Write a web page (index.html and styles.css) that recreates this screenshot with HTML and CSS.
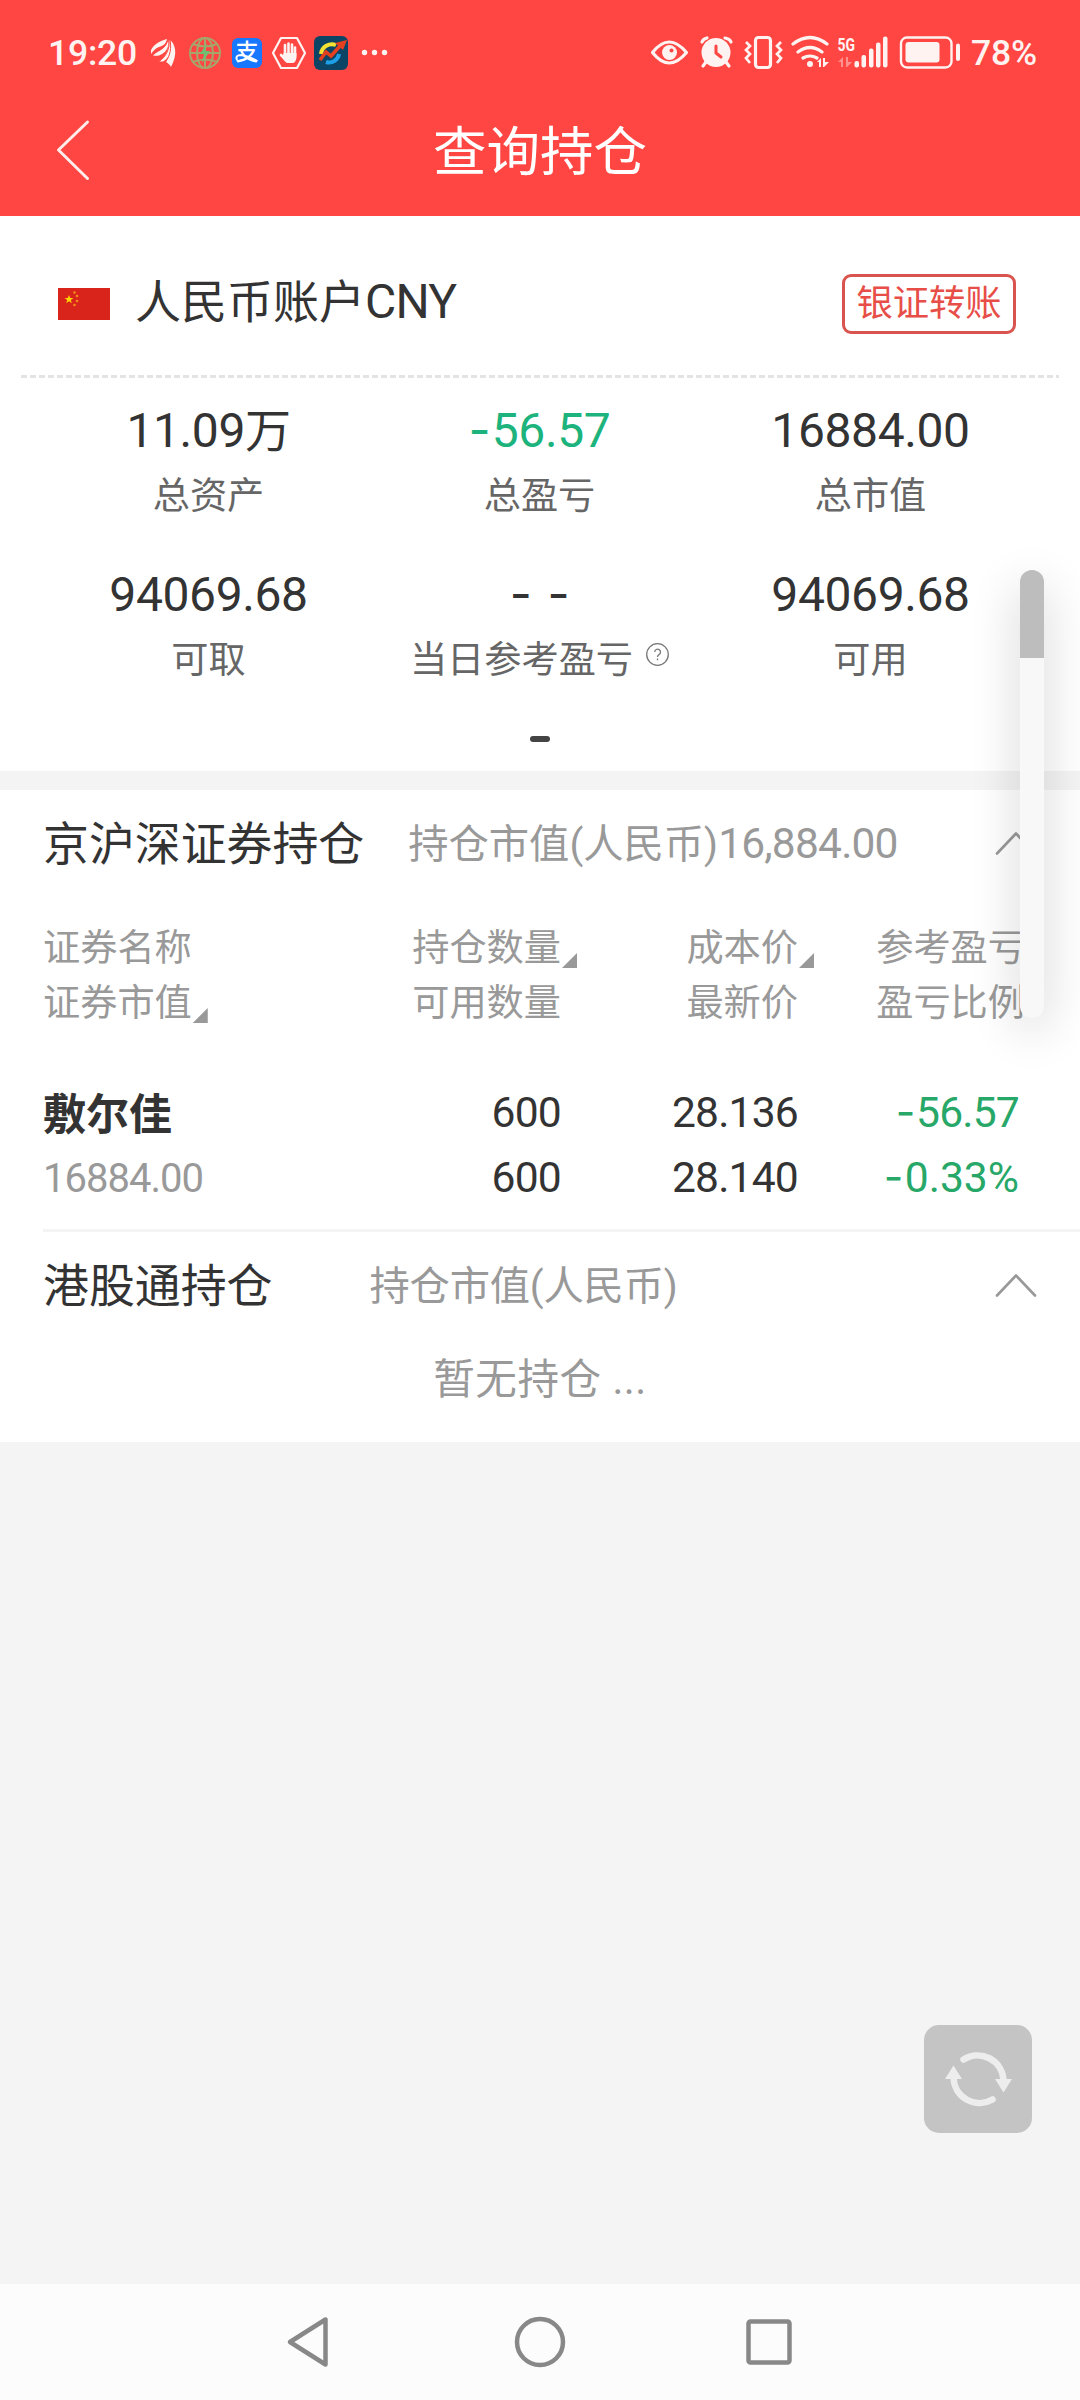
FILE: index.html
```html
<!DOCTYPE html>
<html lang="zh-CN">
<head>
<meta charset="utf-8">
<title>查询持仓</title>
<link rel="stylesheet" href="styles.css">
</head>
<body>
<header class="top">
  <div class="status">
    <div class="status-side">
      <span class="status-text">19:20</span>
      <svg class="status-left" viewBox="150 30 240 46">
        <g fill="#fff3f2">
          <path d="M152 54v-4c3-6 9-9 16-11-1 5-4 7-8 8-3 1-6 4-8 7z"/>
          <path d="M154 55.500c5-5 13-6 15-16 2 8-3 14-9 16q-3 .5-6 0z"/>
          <path d="M160 61.500c7-5 10-12 10-22 5 7 2 18-6 22z"/>
          <path d="M167 62c4-7 6-14 4-22 3 2 4 5 5 9 1 6-1 12-4 18-1-2-3-4-5-5z"/>
        </g>
        <g fill="none" stroke="#ff4642" stroke-width="1"><path d="M153 55c7-7 14-5 16-16M160 61.500c7-5 11-12 10-22M166.500 62c5-7 6-14 4.500-22"/></g>
        <g fill="none" stroke="#a5a56c" stroke-width="2">
          <circle cx="206" cy="53" r="15"/><ellipse cx="206" cy="53" rx="8" ry="15"/>
          <path d="M191 53h30M206 38v30M194 44q12 5 24 0M194 62q12-5 24 0"/>
        </g>
        <path fill="#6fbf73" d="M208 43l-7 11h4l-2 9 8-12h-5z"/>
        <rect x="233" y="38" width="30" height="30" rx="6" fill="#1777ff"/>
        <text class="pay-glyph" x="248" y="60">支</text>
        <path d="M238 60q-2-5 4-5q7 1 16 6" fill="none" stroke="#fff" stroke-width="2"/>
        <path d="M282 38h16l8 15-8 15h-16l-8-15z" fill="none" stroke="#fff3f2" stroke-width="2.2" stroke-linejoin="round"/>
        <g fill="none" stroke="#fff3f2" stroke-width="2.6" stroke-linecap="round"><path d="M286 55V45M289.500 55V43.500M293 55V44.500M296 56V47.500M286 59l-4-4"/></g>
        <path d="M284.500 53h13v5q-1 5-4 5h-5q-2 0-5-5z" fill="#fff3f2"/>
        <rect x="315" y="36" width="34" height="34" rx="6" fill="#0b4464"/>
        <path d="M322 54a11 11 0 0 1 15-9" fill="none" stroke="#f3e233" stroke-width="4"/>
        <path d="M340 54a10 10 0 0 1-13 8" fill="none" stroke="#1d9fe8" stroke-width="4"/>
        <path d="M321 60l6-8 5 4 9-10" fill="none" stroke="#e4401f" stroke-width="3.500"/>
        <path d="M336 43l12-3-4 10z" fill="#e4401f"/>
        <g fill="#fff3f2"><circle cx="365.500" cy="52.500" r="2.700"/><circle cx="375.500" cy="52.500" r="2.700"/><circle cx="385.500" cy="52.500" r="2.700"/></g>
      </svg>
    </div>
    <div class="status-side">
      <svg class="status-right" viewBox="648 30 314 46">
        <g fill="none" stroke="#fff3f2" stroke-width="3.200">
          <path d="M652.500 52.500q16.500-21 34 0q-17.500 21-34 0z" stroke-linejoin="round"/>
          <rect x="755.500" y="37.500" width="15" height="30" rx="3"/>
          <path d="M746 42l4 4-4 4 4 4-4 4 4 5M781 42l-4 4 4 4-4 4 4 4-4 5" stroke-width="2.700"/>
          <path d="M793 44q17-13 34 0M798 52q12-9 24 0M803 58q7-4 14 0" stroke-linecap="round"/>
          <rect x="901" y="37.500" width="50.500" height="30" rx="6" stroke-width="2.400"/>
          <path d="M702 42q1-3 5-4M725 38q5 1 6 4M706 62l-3 4M726 62l3 4" stroke-linecap="round"/>
        </g>
        <g fill="#fff3f2">
          <circle cx="669.500" cy="52.500" r="7.500"/>
          <circle cx="716" cy="52.500" r="14.500"/>
          <circle cx="810" cy="64" r="3"/>
          <path d="M817 62l4-4v9h-2v-5zM823 58h2v4h4l-5 5h-1z"/>
          <rect x="854.500" y="61" width="4.500" height="6.500" rx="2"/><rect x="861.500" y="55" width="4.500" height="12.500" rx="2"/><rect x="869" y="48.500" width="4.500" height="19" rx="2"/><rect x="876" y="42.500" width="4.500" height="25" rx="2"/><rect x="883" y="36.500" width="4.500" height="31" rx="2"/>
          <rect x="905.500" y="42" width="34" height="20.500" rx="3"/><rect x="956" y="43.500" width="4" height="17.500" rx="2"/>
        </g>
        <circle cx="671.500" cy="50.500" r="2" fill="#ff4642"/>
        <path d="M716 46v7l5 4" fill="none" stroke="#ff4642" stroke-width="3" stroke-linecap="round"/>
        <path d="M838 62l5-5v10h-2v-5zM846 57h2v5h4l-5 5h-1z" fill="#ff928f"/>
        <text class="net" x="837.500" y="50.500" textLength="17.500" lengthAdjust="spacingAndGlyphs">5G</text>
      </svg>
      <span class="status-text">78%</span>
    </div>
  </div>
  <div class="titlebar">
    <svg class="back" viewBox="0 0 36 62"><path d="M32.500 3L3.500 31l29 28.500"/></svg>
    <h1 class="title">查询持仓</h1>
  </div>
</header>

<main>
  <section class="account">
    <div class="account-head">
      <svg class="flag" viewBox="0 0 52 32">
        <rect width="52" height="32" fill="#d9241b"/>
        <path fill="#ffd500" d="M11 7l1.200 3h3.200l-2.600 2 1 3.200-2.800-2-2.800 2 1-3.200-2.600-2h3.200z"/>
        <g fill="#f28a1a"><circle cx="16.500" cy="4.500" r="1.300"/><circle cx="19" cy="8" r="1.300"/><circle cx="19" cy="13" r="1.300"/><circle cx="16.500" cy="17" r="1.300"/></g>
      </svg>
      <span class="account-name">人民币账户<span class="latin">CNY</span></span>
      <span class="transfer">银证转账</span>
    </div>
    <div class="dashes"></div>
    <div class="stats">
      <div><div class="value">11.09<span class="unit">万</span></div><div class="label">总资产</div></div>
      <div><div class="value up"><span class="minus">-</span>56.57</div><div class="label">总盈亏</div></div>
      <div><div class="value">16884.00</div><div class="label">总市值</div></div>
      <div><div class="value">94069.68</div><div class="label">可取</div></div>
      <div><div class="value"><span class="minus none">- -</span></div><div class="label">当日参考盈亏<svg class="help" viewBox="0 0 23 23"><circle cx="11.500" cy="11.500" r="10.800"/><path d="M8.700 9a2.900 2.900 0 1 1 4.300 2.600q-1.500.8-1.500 2.400M11.500 15.600v1.600"/></svg></div></div>
      <div><div class="value">94069.68</div><div class="label">可用</div></div>
    </div>
    <div class="pager"></div>
  </section>

  <section class="panel">
    <div class="panel-head">
      <h2 class="panel-title">京沪深证券持仓</h2>
      <span class="panel-sub">持仓市值(人民币)<span class="sum">16,884.00</span></span>
      <svg class="chevron" viewBox="0 0 42 24"><path d="M2 22.500L21 2.500l19 20"/></svg>
    </div>
    <div class="grid grid-head">
      <div><div>证券名称</div><div><span class="sort">证券市值</span></div></div>
      <div><div><span class="sort">持仓数量</span></div><div>可用数量</div></div>
      <div><div><span class="sort">成本价</span></div><div>最新价</div></div>
      <div class="last"><div>参考盈亏</div><div>盈亏比例</div></div>
    </div>
    <div class="grid grid-row">
      <div><div class="stock">敷尔佳</div><div class="amount">16884.00</div></div>
      <div><div>600</div><div>600</div></div>
      <div><div>28.136</div><div>28.140</div></div>
      <div class="down"><div><span class="minus">-</span>56.57</div><div class="ratio"><span class="minus">-</span>0.33%</div></div>
    </div>
  </section>
  <div class="rule"></div>
  <section class="panel">
    <div class="panel-head wide">
      <h2 class="panel-title">港股通持仓</h2>
      <span class="panel-sub">持仓市值(人民币)</span>
      <svg class="chevron" viewBox="0 0 42 24"><path d="M2 22.500L21 2.500l19 20"/></svg>
    </div>
    <p class="empty">暂无持仓 ...</p>
  </section>
</main>

<div class="scroll"><div class="thumb"></div></div>
<div class="refresh">
  <svg viewBox="0 0 108 108">
    <path d="M39.500 34.500A26 26 0 0 1 79.500 55M68.500 74.500A26 26 0 0 1 29.500 53"/>
    <path class="tip" d="M71 54h17l-8.500 13.500zM21 54h17l-8.500-13.500z"/>
  </svg>
</div>

<nav class="nav">
  <svg viewBox="0 0 52 54"><path d="M40.500 4.500v45L5 27z"/></svg>
  <svg viewBox="0 0 52 54"><circle cx="26" cy="27" r="23"/></svg>
  <svg viewBox="0 0 52 54"><rect x="4.500" y="6.500" width="41" height="41" rx="2"/></svg>
</nav>
</body>
</html>
```
FILE: styles.css
```css
* { box-sizing: border-box; margin: 0; padding: 0; }
body {
  width: 1080px;
  height: 2400px;
  position: relative;
  display: flex;
  flex-direction: column;
  background: #f4f4f4;
  color: #333;
  font-family: Roboto, "Noto Sans CJK SC", sans-serif;
  overflow: hidden;
}
svg { display: block; flex: none; }

.top { height: 216px; background: #ff4642; color: #fff; }
.status {
  height: 105px;
  padding: 0 43px 0 48px;
  display: flex;
  justify-content: space-between;
}
.status-side { display: flex; align-items: center; }
.status-text { font-size: 35.5px; font-weight: 500; line-height: 46px; color: #fff3f2; white-space: nowrap; letter-spacing: -0.2px; }
.status-left { width: 240px; height: 46px; margin-left: 12px; }
.status-right { width: 314px; height: 46px; margin-right: 9px; }
.pay-glyph { font-size: 23px; font-weight: 500; fill: #fff; text-anchor: middle; }
.net { font-size: 18px; font-weight: 700; fill: #fff3f2; font-family: Roboto, sans-serif; }
.titlebar { height: 111px; display: flex; align-items: center; padding: 0 55px 16px; }
.back { width: 36px; height: 62px; margin-top: -5px; }
.back path { fill: none; stroke: #ffeceb; stroke-width: 3; stroke-linecap: round; stroke-linejoin: round; }
.title { flex: 1; margin-right: 36px; text-align: center; font-size: 53.5px; font-weight: 400; line-height: 80px; }

.account { height: 555px; background: #fff; }
.account-head { height: 159px; padding: 16px 64px 0 58px; display: flex; align-items: center; }
.flag { width: 52px; height: 32px; }
.account-name { margin-left: 25px; padding-bottom: 4px; font-size: 46px; line-height: 60px; }
.latin { font-size: 48px; line-height: 0; letter-spacing: -0.8px; }
.transfer {
  margin-left: auto;
  width: 174px;
  height: 60px;
  border: 3px solid #d9544f;
  border-radius: 9px;
  color: #e84e48;
  font-size: 36.3px;
  line-height: 53px;
  text-align: center;
  white-space: nowrap;
}
.dashes { height: 3px; margin: 0 21px; background: repeating-linear-gradient(90deg, #e4e4e4 0 6px, transparent 6px 9px); }
.stats {
  display: grid;
  grid-template-columns: repeat(3, 331px);
  row-gap: 44px;
  padding: 23px 43px 0 43px;
  text-align: center;
}
.value { font-size: 48px; line-height: 60px; letter-spacing: -0.4px; }
.unit { font-size: 46px; line-height: 0; }
.minus { font-family: Inter, sans-serif; line-height: 0; margin-right: 1.5px; }
.none { word-spacing: 3px; margin-right: 0; }
.up { color: #1db37c; }
.label { margin-top: 10px; font-size: 37.2px; line-height: 50px; color: #666; display: flex; justify-content: center; white-space: nowrap; }
.help { width: 23px; height: 23px; margin: 8px 0 0 13px; fill: none; stroke: #777; stroke-width: 1.3; }
.pager { width: 20px; height: 6px; margin: 51px auto 0; border-radius: 3px; background: #444; }

.panel { background: #fff; }
.account + .panel { margin-top: 19px; }
.panel-head { height: 106px; padding: 0 43px 0 43px; display: flex; align-items: center; white-space: nowrap; }
.panel-title { padding-top: 2px; font-size: 45.9px; font-weight: 400; line-height: 60px; }
.panel-sub { margin-left: 44px; padding-top: 3px; font-size: 40.3px; line-height: 60px; color: #999; }
.wide .panel-sub { margin-left: 97px; letter-spacing: -0.2px; }
.sum { font-size: 42.5px; line-height: 0; letter-spacing: -0.8px; }
.chevron { width: 42px; height: 24px; margin-left: auto; fill: none; stroke: #999; stroke-width: 2.6; stroke-linecap: round; stroke-linejoin: round; }

.grid { display: grid; grid-template-columns: 301px 217px 237px 221px; padding-left: 43px; text-align: right; white-space: nowrap; }
.grid > :first-child { text-align: left; }
.grid-head { padding-top: 25px; font-size: 37.2px; line-height: 55px; color: #999; }
.last { margin-right: -6px; }
.sort { position: relative; display: inline-block; }
.sort::after {
  content: "";
  position: absolute;
  right: -16px;
  bottom: 8px;
  width: 15px;
  height: 15px;
  background: #999;
  clip-path: polygon(100% 0, 100% 100%, 0 100%);
}
.grid-row { padding-top: 49px; padding-bottom: 19px; font-size: 42.6px; line-height: 65px; letter-spacing: -0.8px; }
.stock { padding-top: 3px; margin-bottom: -3px; font-size: 43px; font-weight: 700; letter-spacing: 0; }
.amount { padding-top: 1px; margin-bottom: -1px; font-size: 40px; letter-spacing: -1px; color: #999; }
.down { color: #27a768; }
.ratio { letter-spacing: 0; }
.rule { height: 3px; background: linear-gradient(90deg, #fff 43px, #f4f4f4 43px); }
.empty { height: 104px; font-size: 41.6px; line-height: 84px; text-align: center; color: #999; letter-spacing: 0.5px; }

.scroll {
  position: absolute;
  left: 1020px;
  top: 570px;
  width: 24px;
  height: 448px;
  border-radius: 12px;
  background: #f8f8f8;
  box-shadow: 0 14px 48px rgba(0, 0, 0, 0.2);
}
.thumb { height: 88px; border-radius: 12px 12px 0 0; background: #bdbdbd; }
.refresh { position: absolute; left: 924px; top: 2025px; width: 108px; height: 108px; border-radius: 15px; background: #c4c4c4; }
.refresh path { fill: none; stroke: #ededed; stroke-width: 6.5; stroke-linecap: round; }
.refresh .tip { fill: #ededed; stroke: none; }

.nav { margin-top: auto; height: 116px; background: #fcfcfc; display: flex; justify-content: center; gap: 177.5px; }
.nav svg { width: 52px; height: 54px; margin-top: 31px; fill: none; stroke: #888; stroke-width: 4.5; stroke-linejoin: round; }
```
